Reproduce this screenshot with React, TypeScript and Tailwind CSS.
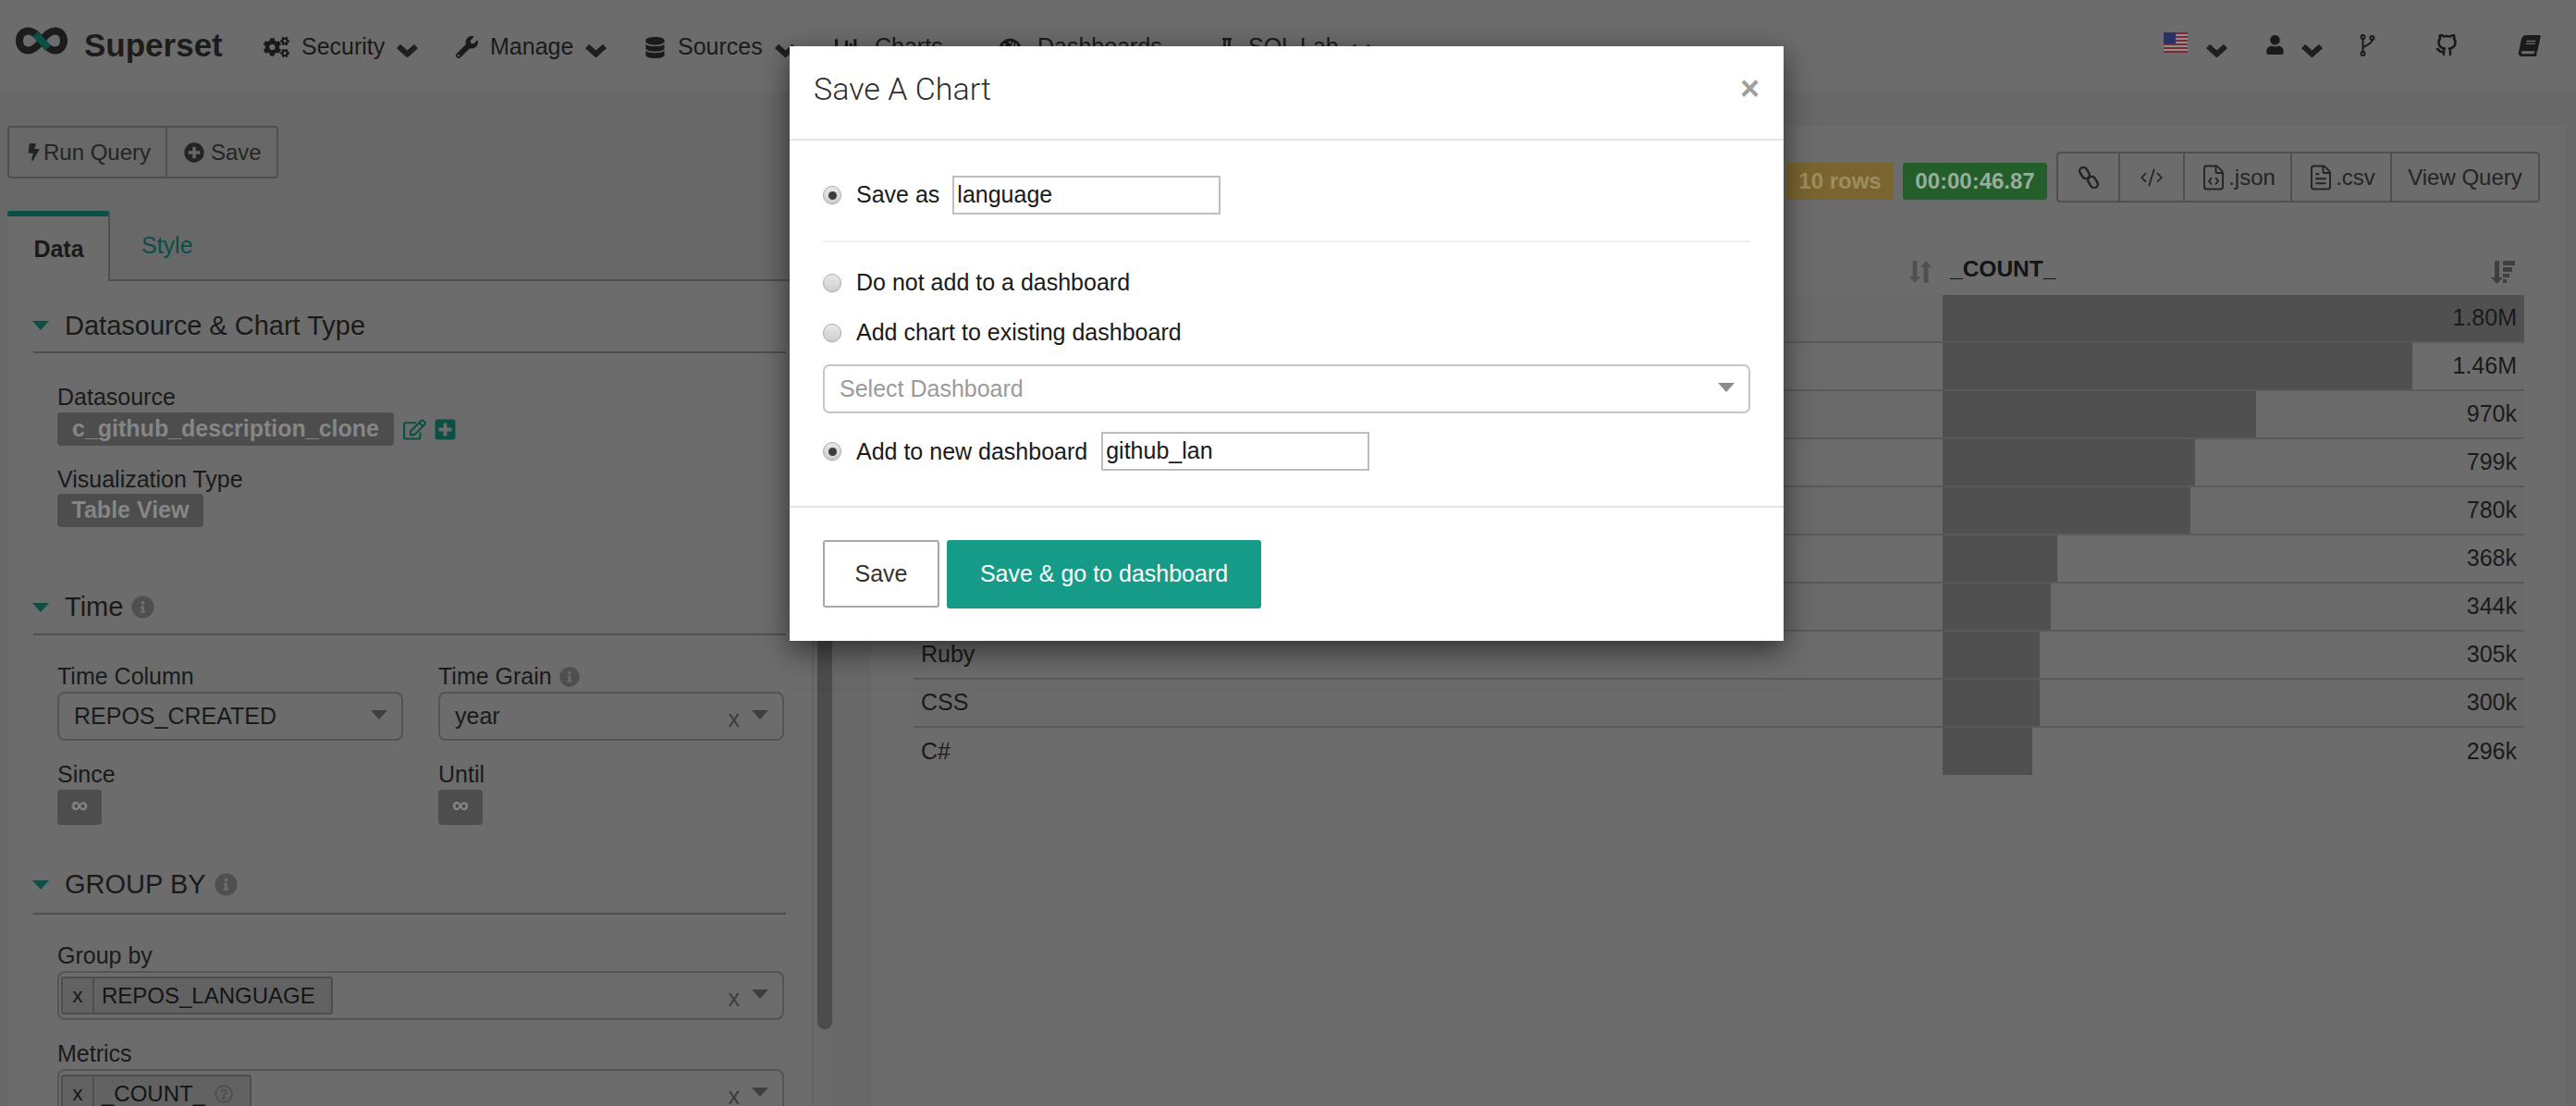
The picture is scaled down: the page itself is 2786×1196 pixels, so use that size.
import React from 'react';
import {
  FaBolt,
  FaBook,
  FaChartBar,
  FaCogs,
  FaDatabase,
  FaFlask,
  FaInfoCircle,
  FaPlusCircle,
  FaPlusSquare,
  FaRegEdit,
  FaRegQuestionCircle,
  FaTachometerAlt,
  FaUser,
  FaWrench,
} from 'react-icons/fa';
import { FiGithub } from 'react-icons/fi';
import { CodeXml, FileCode, FileText } from 'lucide-react';

// the first seven names sit behind the modal
const rows = [
  { name: '', value: '1.80M', bar: 629 },
  { name: '', value: '1.46M', bar: 508 },
  { name: '', value: '970k', bar: 339 },
  { name: '', value: '799k', bar: 273 },
  { name: '', value: '780k', bar: 268 },
  { name: '', value: '368k', bar: 124 },
  { name: '', value: '344k', bar: 117 },
  { name: 'Ruby', value: '305k', bar: 105 },
  { name: 'CSS', value: '300k', bar: 105 },
  { name: 'C#', value: '296k', bar: 97 },
];

const Logo = () => (
  <svg width="56" height="30" viewBox="0 0 56 30" fill="none">
    <path
      d="M28 15 C23 8 19 4.500 13.500 4.500 C7.500 4.500 4 9.500 4 15 C4 20.500 7.500 25.500 13.500 25.500 C19 25.500 23 22 28 15 C33 8 37 4.500 42.500 4.500 C48.500 4.500 52 9.500 52 15 C52 20.500 48.500 25.500 42.500 25.500 C37 25.500 33 22 28 15 Z"
      stroke="#1c1c1c"
      strokeWidth="8"
    />
    <path d="M21 8 L28 15 L35 23" stroke="#0b4f45" strokeWidth="8" />
  </svg>
);

const Flag = () => (
  <svg width="26" height="22" viewBox="0 0 26 22">
    <rect width="26" height="22" fill="#8f8f8f" />
    {[0, 4, 8, 12, 16, 20].map((y) => (
      <rect key={y} y={y} width="26" height="2" fill="#7a2a30" />
    ))}
    <rect width="13" height="12" fill="#2c3163" />
  </svg>
);

const Fork = () => (
  <svg width="17" height="24" viewBox="0 0 17 24" fill="none" stroke="#1a1a1a" strokeWidth="2">
    <circle cx="3.500" cy="3" r="2" />
    <circle cx="13.500" cy="4" r="2" />
    <circle cx="3.500" cy="21" r="2" />
    <path d="M3.500 5V19M13.500 6C13.500 12 4 11 3.500 16" />
  </svg>
);

const Chevron = ({ className }: { className: string }) => (
  <svg width="23" height="15" viewBox="0 0 23 15" fill="none" stroke="#1f1f1f" strokeWidth="6" className={className}>
    <path d="M2 3l9.500 8.500L21 3" />
  </svg>
);

const ChainLink = () => (
  <svg width="24" height="24" viewBox="0 0 24 24" fill="none" stroke="#242424" strokeWidth="2.400">
    <rect x="3.500" y="0.500" width="8" height="13" rx="4" transform="rotate(-32 7.500 7)" />
    <rect x="12.500" y="10.500" width="8" height="13" rx="4" transform="rotate(-32 16.500 17)" />
  </svg>
);

const SortBoth = () => (
  <svg width="24" height="26" viewBox="0 0 24 26" fill="#505050">
    <path d="M3.500 1h5v17h3.500l-6 7-6-7h3.500z" />
    <path d="M15.500 25h5V8h3.500l-6-7-6 7h3.500z" />
  </svg>
);

const SortDown = () => (
  <svg width="26" height="26" viewBox="0 0 26 26" fill="#3f3f3f">
    <path d="M4 1h5v18h4l-6.500 7L0 19h4z" />
    <rect x="13" y="1" width="13" height="5" />
    <rect x="13" y="8" width="10" height="5" />
    <rect x="13" y="15" width="7" height="4" />
    <rect x="13" y="21" width="4" height="4" />
  </svg>
);

const Triangle = ({ className }: { className: string }) => (
  <span className={`w-0 h-0 border-x-[9px] border-x-transparent border-t-[10px] ${className}`} />
);

const NavItem = ({ icon, label, caret, className }: { icon: React.ReactNode; label: string; caret?: boolean; className: string }) => (
  <div className={`flex items-center h-[100px] pt-[2px] ${className}`}>
    <span className="flex justify-center mr-[13px] text-[#1a1a1a]">{icon}</span>
    <span className="text-[25px] text-[#1a1a1a]">{label}</span>
    {caret && <Chevron className="ml-[13px] mt-[6px]" />}
  </div>
);

const SectionHeader = ({ title, info, className }: { title: string; info?: boolean; className: string }) => (
  <div className={`flex items-center border-b-2 border-[#4f4f4f] ${className}`}>
    <Triangle className="border-t-[#0b4f45] -ml-px mr-[17px]" />
    <span className="text-[29px] text-[#1a1a1a] leading-none">{title}</span>
    {info && <FaInfoCircle className="ml-[9px] text-[25px] text-[#4f4f4f]" />}
  </div>
);

const FieldLabel = ({ children }: { children: React.ReactNode }) => (
  <div className="flex items-center h-[31px] text-[25px] text-[#1a1a1a]">{children}</div>
);

const Badge = ({ children, className }: { children: React.ReactNode; className: string }) => (
  <div className={`flex items-center justify-center bg-[#4d4d4d] rounded-[4px] text-[#868686] font-bold text-[25px] ${className}`}>
    {children}
  </div>
);

const SelectBox = ({ children, clearable, className }: { children: React.ReactNode; clearable?: boolean; className: string }) => (
  <div className={`flex items-center h-[53px] border-2 border-[#545454] rounded-[8px] ${className}`}>
    <div className="flex-1 flex items-center min-w-0">{children}</div>
    {clearable && <span className="text-[25px] text-[#3c3c3c] mt-[6px] mr-[13px]">x</span>}
    <Triangle className="border-t-[#3f3f3f] -mt-[4px] mr-[15px]" />
  </div>
);

const Chip = ({ children, className }: { children: React.ReactNode; className: string }) => (
  <div className={`flex items-center h-[41px] ml-[2px] border-2 border-[#4d4d4d] rounded-[3px] bg-[#626262] text-[24px] text-[#141414] ${className}`}>
    <span className="w-[34px] h-full flex items-center justify-center border-r-2 border-[#4d4d4d] text-[22px]">x</span>
    <span className="pl-[8px]">{children}</span>
  </div>
);

const ToolButton = ({ children, className }: { children: React.ReactNode; className: string }) => (
  <div className={`flex items-center justify-center h-full border-l-2 first:border-l-0 border-[#4f4f4f] text-[24px] text-[#242424] ${className}`}>
    {children}
  </div>
);

const Radio = ({ checked }: { checked?: boolean }) => (
  <span className="flex items-center justify-center w-[20px] h-[20px] rounded-full border border-[#a9a9a9] bg-gradient-to-b from-[#e8e8e8] to-[#cfcfcf] shadow-[0_1px_1px_#e4e4e4] shrink-0">
    {checked && <span className="w-[9px] h-[9px] rounded-full bg-[#3d3d3d]" />}
  </span>
);

const ModalInput = ({ value }: { value: string }) => (
  <div className="flex items-center w-[290px] h-[42px] border-2 border-[#bdbdbd] pl-[3px] text-[25px] text-[#1a1a1a] bg-white">
    {value}
  </div>
);

const SaveModal = () => (
  <div className="absolute inset-0 flex justify-center items-start pt-[50px] pr-[3px]">
    <div className="w-[1075px] h-[643px] bg-white flex flex-col shadow-[0_10px_30px_rgba(0,0,0,0.55)] text-[#333333] text-[25px]">
      <div className="flex items-center justify-between h-[102px] pl-[26px] pr-[26px] border-b-2 border-[#e5e5e5]">
        <span className="font-['Roboto',sans-serif] text-[34px] font-light mb-[7px] text-[#2e2e2e]">Save A Chart</span>
        <span className="text-[36px] font-bold text-[#9f9f9f] leading-none mb-[8px]">×</span>
      </div>
      <div className="flex-1 px-[36px]">
        <div className="flex items-center h-[110px] pt-[19px] border-b-2 border-[#eeeeee] pb-[9px]">
          <Radio checked />
          <span className="ml-[16px] mr-[14px] text-[#1a1a1a]">Save as</span>
          <ModalInput value="language" />
        </div>
        <div className="flex items-center h-[30px] mt-[29px] text-[#1a1a1a]">
          <Radio />
          <span className="ml-[16px]">Do not add to a dashboard</span>
        </div>
        <div className="flex items-center h-[30px] mt-[24px] text-[#1a1a1a]">
          <Radio />
          <span className="ml-[16px]">Add chart to existing dashboard</span>
        </div>
        <div className="flex items-center justify-between h-[53px] mt-[19px] pl-[16px] pr-[15px] border-2 border-[#c6c6c6] rounded-[7px] text-[#9a9a9a]">
          <span>Select Dashboard</span>
          <Triangle className="border-t-[#8c8c8c] -mt-[4px]" />
        </div>
        <div className="flex items-center h-[42px] mt-[20px] text-[#1a1a1a]">
          <Radio checked />
          <span className="ml-[16px] mr-[15px] mt-[2px]">Add to new dashboard</span>
          <ModalInput value="github_lan" />
        </div>
      </div>
      <div className="flex items-start h-[146px] pt-[35px] pl-[36px] border-t-2 border-[#e5e5e5] gap-[8px]">
        <div className="flex items-center justify-center w-[126px] h-[73px] border-2 border-[#a8a8a8] rounded-[3px] text-[#333333]">Save</div>
        <div className="flex items-center justify-center w-[340px] h-[74px] bg-[#159b88] rounded-[3px] text-white">Save &amp; go to dashboard</div>
      </div>
    </div>
  </div>
);

export default function App() {
  return (
    <div className="relative w-[2786px] h-[1196px] overflow-hidden bg-[#686868] font-['Liberation_Sans',sans-serif]">
      <nav className="flex h-[100px] bg-[#6c6c6c]">
        <div className="flex items-start pt-[29px] pl-[17px] w-[285px] shrink-0">
          <Logo />
          <span className="ml-[18px] -mt-[6px] text-[35px] font-bold text-[#1c1c1c]">Superset</span>
        </div>
        <NavItem className="w-[208px]" icon={<FaCogs className="text-[28px]" />} label="Security" caret />
        <NavItem className="w-[204px]" icon={<FaWrench className="text-[24px]" />} label="Manage" caret />
        <NavItem className="w-[206px]" icon={<FaDatabase className="text-[23px]" />} label="Sources" caret />
        <NavItem className="w-[177px]" icon={<FaChartBar className="text-[25px] mr-[5px]" />} label="Charts" />
        <NavItem className="w-[237px]" icon={<FaTachometerAlt className="text-[25px] mr-[4px]" />} label="Dashboards" />
        <NavItem className="flex-1" icon={<FaFlask className="text-[20px]" />} label="SQL Lab" caret />
        <div className="flex items-start pt-[35px] pr-[39px] text-[#1a1a1a]">
          <Flag />
          <Chevron className="ml-[20px] mt-[12px]" />
          <FaUser className="ml-[41px] mt-[3px] text-[21px]" />
          <Chevron className="ml-[18px] mt-[12px]" />
          <span className="ml-[40px] mt-[2px]"><Fork /></span>
          <FiGithub className="ml-[65px] mt-[2px] text-[24px]" strokeWidth={2.6} />
          <FaBook className="ml-[66px] mt-[3px] text-[23px] -skew-x-12" />
        </div>
      </nav>

      <div className="flex h-[1096px]">
        <aside className="w-[900px] shrink-0 pl-[8px] flex">
          <div className="w-[870px] shrink-0">
            <div className="flex items-center w-[293px] h-[57px] mt-[36px] border-2 border-[#4f4f4f] rounded-[4px] text-[24px] text-[#242424]">
              <div className="flex items-center h-full w-[171px] pl-[17px] border-r-2 border-[#4f4f4f]">
                <FaBolt className="text-[19px] mr-px" />
                <span>Run Query</span>
              </div>
              <div className="flex items-center pl-[18px]">
                <FaPlusCircle className="text-[22px] mr-[7px]" />
                <span>Save</span>
              </div>
            </div>

            <div className="flex items-end h-[76px] mt-[35px] border-b-2 border-[#4f4f4f]">
              <div className="flex items-center justify-center w-[111px] h-[76px] -mb-[2px] pt-[2px] pl-[2px] bg-[#6c6c6c] border-t-[6px] border-t-[#0b4f45] border-r-2 border-r-[#4f4f4f] rounded-t-[3px] text-[25px] font-bold text-[#1a1a1a]">
                Data
              </div>
              <div className="flex items-center h-[74px] pl-[34px] pt-[2px] text-[25px] text-[#0b4f45]">Style</div>
            </div>

            <div className="h-[892px] bg-[#6c6c6c] pl-[28px] pr-[28px] overflow-hidden">
              <SectionHeader className="h-[58px] mt-[20px]" title="Datasource & Chart Type" />
              <div className="pl-[26px]">
                <div className="mt-[32px] mb-px"><FieldLabel>Datasource</FieldLabel></div>
                <div className="flex items-center">
                  <Badge className="w-[364px] h-[36px]">c_github_description_clone</Badge>
                  <FaRegEdit className="ml-[10px] text-[25px] text-[#0b4f45]" />
                  <FaPlusSquare className="ml-[8px] text-[25px] text-[#0b4f45]" />
                </div>
                <div className="mt-[21px]"><FieldLabel>Visualization Type</FieldLabel></div>
                <Badge className="w-[158px] h-[36px]">Table View</Badge>
              </div>

              <SectionHeader className="h-[59px] mt-[58px]" title="Time" info />
              <div className="pl-[26px] grid grid-cols-[374px_374px] gap-x-[38px]">
                <div>
                  <div className="mt-[29px] mb-px"><FieldLabel>Time Column</FieldLabel></div>
                  <SelectBox className="pl-[16px] text-[25px] text-[#1a1a1a]">REPOS_CREATED</SelectBox>
                </div>
                <div>
                  <div className="mt-[29px] mb-px">
                    <FieldLabel>
                      Time Grain
                      <FaInfoCircle className="ml-[8px] text-[22px] text-[#4f4f4f]" />
                    </FieldLabel>
                  </div>
                  <SelectBox clearable className="pl-[16px] text-[25px] text-[#1a1a1a]">year</SelectBox>
                </div>
                <div>
                  <div className="mt-[21px] mb-px"><FieldLabel>Since</FieldLabel></div>
                  <Badge className="w-[48px] h-[38px] pb-[4px]">∞</Badge>
                </div>
                <div>
                  <div className="mt-[21px] mb-px"><FieldLabel>Until</FieldLabel></div>
                  <Badge className="w-[48px] h-[38px] pb-[4px]">∞</Badge>
                </div>
              </div>

              <SectionHeader className="h-[63px] mt-[34px]" title="GROUP BY" info />
              <div className="pl-[26px]">
                <div className="mt-[29px] mb-px"><FieldLabel>Group by</FieldLabel></div>
                <SelectBox clearable className="w-[786px]">
                  <Chip className="w-[294px]">REPOS_LANGUAGE</Chip>
                </SelectBox>
                <div className="mt-[21px] mb-px"><FieldLabel>Metrics</FieldLabel></div>
                <SelectBox clearable className="w-[786px]">
                  <Chip className="w-[206px]">
                    <span className="flex items-center">
                      _COUNT_
                      <FaRegQuestionCircle className="ml-[10px] text-[20px] text-[#4f4f4f]" />
                    </span>
                  </Chip>
                </SelectBox>
              </div>
            </div>
          </div>
          <div className="w-[22px] shrink-0 flex justify-end border-l-2 border-[#636363] bg-[#6a6a6a] h-[1096px]">
            <div className="w-[16px] h-[1013px] bg-[#4c4c4c] rounded-b-[8px]" />
          </div>
        </aside>

        <main className="flex-1 ml-[42px] mr-[11px] mt-[36px] bg-[#6c6c6c] pt-[28px]">
          <div className="flex justify-end items-start pr-[28px]">
            <div className="flex items-center justify-center w-[116px] h-[40px] mt-[12px] bg-[#7a6530] rounded-[3px] text-[24px] font-bold text-[#9d8d5e]">10 rows</div>
            <div className="flex items-center justify-center w-[156px] h-[40px] mt-[12px] ml-[10px] bg-[#235e2b] rounded-[3px] text-[24px] font-bold text-[#9aac9b]">00:00:46.87</div>
            <div className="flex items-center w-[523px] h-[55px] ml-[10px] border-2 border-[#4f4f4f] rounded-[4px]">
              <ToolButton className="w-[65px]"><ChainLink /></ToolButton>
              <ToolButton className="w-[70px]"><CodeXml className="w-[26px] h-[26px]" strokeWidth={1.6} /></ToolButton>
              <ToolButton className="w-[116px]"><FileCode className="w-[30px] h-[32px] mr-px" strokeWidth={1.5} />.json</ToolButton>
              <ToolButton className="w-[108px]"><FileText className="w-[30px] h-[32px] mr-px" strokeWidth={1.5} />.csv</ToolButton>
              <ToolButton className="flex-1">View Query</ToolButton>
            </div>
          </div>

          <div className="ml-[46px] mr-[45px] mt-[51px]">
            <div className="flex h-[49px] pt-[3px] items-start font-bold text-[24.5px] text-[#141414]">
              <div className="flex justify-end items-start w-[1113px] pr-[12px] pt-[8px]">
                <SortBoth />
              </div>
              <div className="flex justify-between items-start flex-1 pl-[8px] pr-[10px]">
                <span>_COUNT_</span>
                <span className="pt-[8px]"><SortDown /></span>
              </div>
            </div>
            {rows.map((row, i) => (
              <div
                key={row.value}
                className={`flex items-stretch text-[25px] text-[#1a1a1a] ${i % 2 === 0 ? 'bg-[#6a6a6a]' : ''} ${i === rows.length - 1 ? 'h-[51px]' : 'h-[52px] border-b-2 border-[#5a5a5a]'}`}
              >
                <div className="flex items-center w-[1113px] pl-[8px]">{row.name}</div>
                <div className="relative flex-1 flex items-center justify-end pr-[8px]">
                  <div className="absolute left-0 top-0 bottom-0 bg-[#505050]" style={{ width: row.bar }} />
                  <span className="relative">{row.value}</span>
                </div>
              </div>
            ))}
          </div>
        </main>
      </div>

      <SaveModal />
    </div>
  );
}
